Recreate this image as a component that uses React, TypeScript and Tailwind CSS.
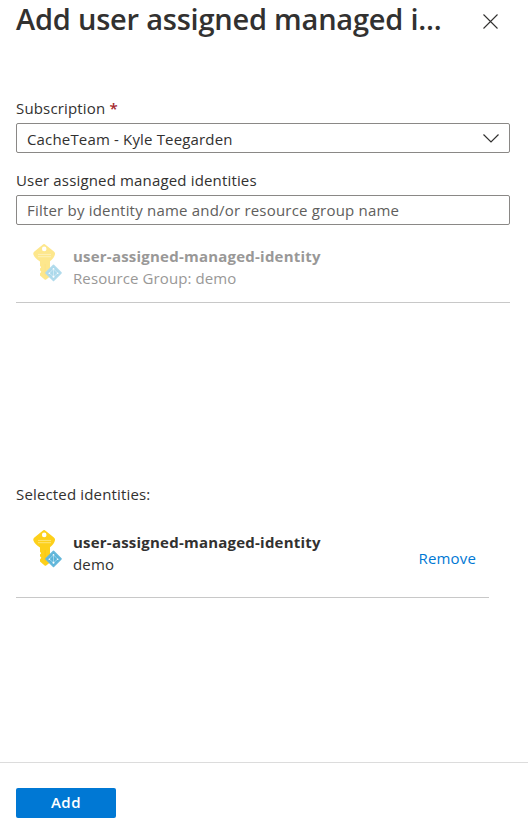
import React from "react";

function IdentityIcon({ faded = false }: { faded?: boolean }) {
  return (
    <svg viewBox="0 0 30 38" className={`h-[38px] w-[30px] shrink-0 ${faded ? "opacity-50" : ""}`}>
      <path
        d="M9.7 0.7a2 2 0 0 1 2.8 0L20.9 7.6a2.6 2.6 0 0 1 1 2.8c-.3 2-1.9 4.4-4.9 6.8V32.6L13.2 35.4a1.2 1.2 0 0 1-1.6 0L7 31.6v-2.2l1.3-1.6L7 26.2v-1.6l1.2-1.4L7 21.8V17.4C3.4 14.8 1.1 12.7.4 10.4a2.6 2.6 0 0 1 1-2.8z"
        fill="#fdd01b"
      />
      <path d="M11.6 20h1.1V32l-1.1-1z" fill="#fac714" />
      <circle cx="11.2" cy="4.9" r="2.3" fill="#fff" />
      <path d="M5 10.4h13M5 12.7h13" stroke="#fde680" strokeWidth="0.9" />
      <path d="M20.5 21.4 28 28.9 20.5 36.4 13 28.9z" fill="#59b4d9" stroke="#66b8db" strokeWidth="1.6" strokeLinejoin="round" />
      <path d="M20.5 24.8v8M20.5 24.8l-4.2 4.4 4.2 3.6 4.2-3.6z" stroke="#b9dff0" strokeWidth="0.7" fill="none" />
      <g fill="#fff">
        <circle cx="20.5" cy="24.8" r="0.8" />
        <circle cx="16.3" cy="29.2" r="0.8" />
        <circle cx="24.7" cy="29.2" r="0.8" />
        <circle cx="20.5" cy="32.8" r="1" />
      </g>
    </svg>
  );
}

export default function App() {
  return (
    <div className="flex h-[831px] w-[528px] flex-col bg-white font-['Open_Sans','Noto_Sans',sans-serif] text-[15px] leading-[22px] tracking-[0.16px] text-[#323130]">
      <header className="flex h-[97px] items-start pl-4 pr-[30px]">
        <h1 className="-mt-px w-[440px] whitespace-nowrap text-[29px] font-semibold leading-10 tracking-[-0.22px]">
          <span>Add user assigned managed i...</span>
        </h1>
        <button aria-label="Close" className="ml-auto mt-[14px]">
          <svg viewBox="0 0 15 15" className="size-[15px]" fill="none" stroke="#323130" strokeWidth="1.1">
            <path d="M0.5 0.5l14 14M14.5 0.5l-14 14" />
          </svg>
        </button>
      </header>

      <main className="flex flex-1 flex-col pl-4 pr-[18px]">
        <label className="h-[26px]">
          <span>Subscription</span> <span className="font-semibold text-[#a4262c]">*</span>
        </label>
        <div className="flex h-[30px] items-center justify-between rounded-[2px] border border-[#8a8886] pl-[10px] pr-[10px]">
          <span className="mt-[2px]">CacheTeam - Kyle Teegarden</span>
          <svg viewBox="0 0 16 9" className="h-[9px] w-4" fill="none" stroke="#323130" strokeWidth="1.2">
            <path d="M0.5 0.5l7.5 7.5 7.5-7.5" />
          </svg>
        </div>
        <label className="mt-4 h-[26px]">
          <span>User assigned managed identities</span>
        </label>
        <div className="flex h-[30px] items-center rounded-[2px] border border-[#8a8886] pl-[10px] tracking-[0.2px] text-[#605e5c]">
          <span>Filter by identity name and/or resource group name</span>
        </div>

        <div className="flex h-[78px] border-b border-[#c8c8c8] pl-[17px] pt-[19px] text-[#999897]">
          <IdentityIcon faded />
          <div className="ml-[10px] mt-px flex flex-col">
            <span className="font-bold tracking-[0.22px]">user-assigned-managed-identity</span>
            <span className="tracking-[0.1px]">Resource Group: demo</span>
          </div>
        </div>

        <div className="mt-[180px]">
          <span>Selected identities:</span>
        </div>
        <div className="mr-[21px] flex h-[93px] border-b border-[#c8c8c8] pl-[17px] pt-[25px]">
          <IdentityIcon />
          <div className="ml-[10px] mt-px flex flex-col">
            <span className="font-bold tracking-[0.22px]">user-assigned-managed-identity</span>
            <span>demo</span>
          </div>
          <a className="ml-auto mr-[13px] mt-[17px] text-[#0078d4]">Remove</a>
        </div>
      </main>

      <footer className="h-[69px] border-t border-[#dcdcdc] pl-4 pt-[25px]">
        <button className="flex h-[30px] w-[100px] items-center justify-center rounded-[2px] bg-[#0078d4] pb-[2px] font-semibold text-white">
          <span className="tracking-[0.5px]">Add</span>
        </button>
      </footer>
    </div>
  );
}
